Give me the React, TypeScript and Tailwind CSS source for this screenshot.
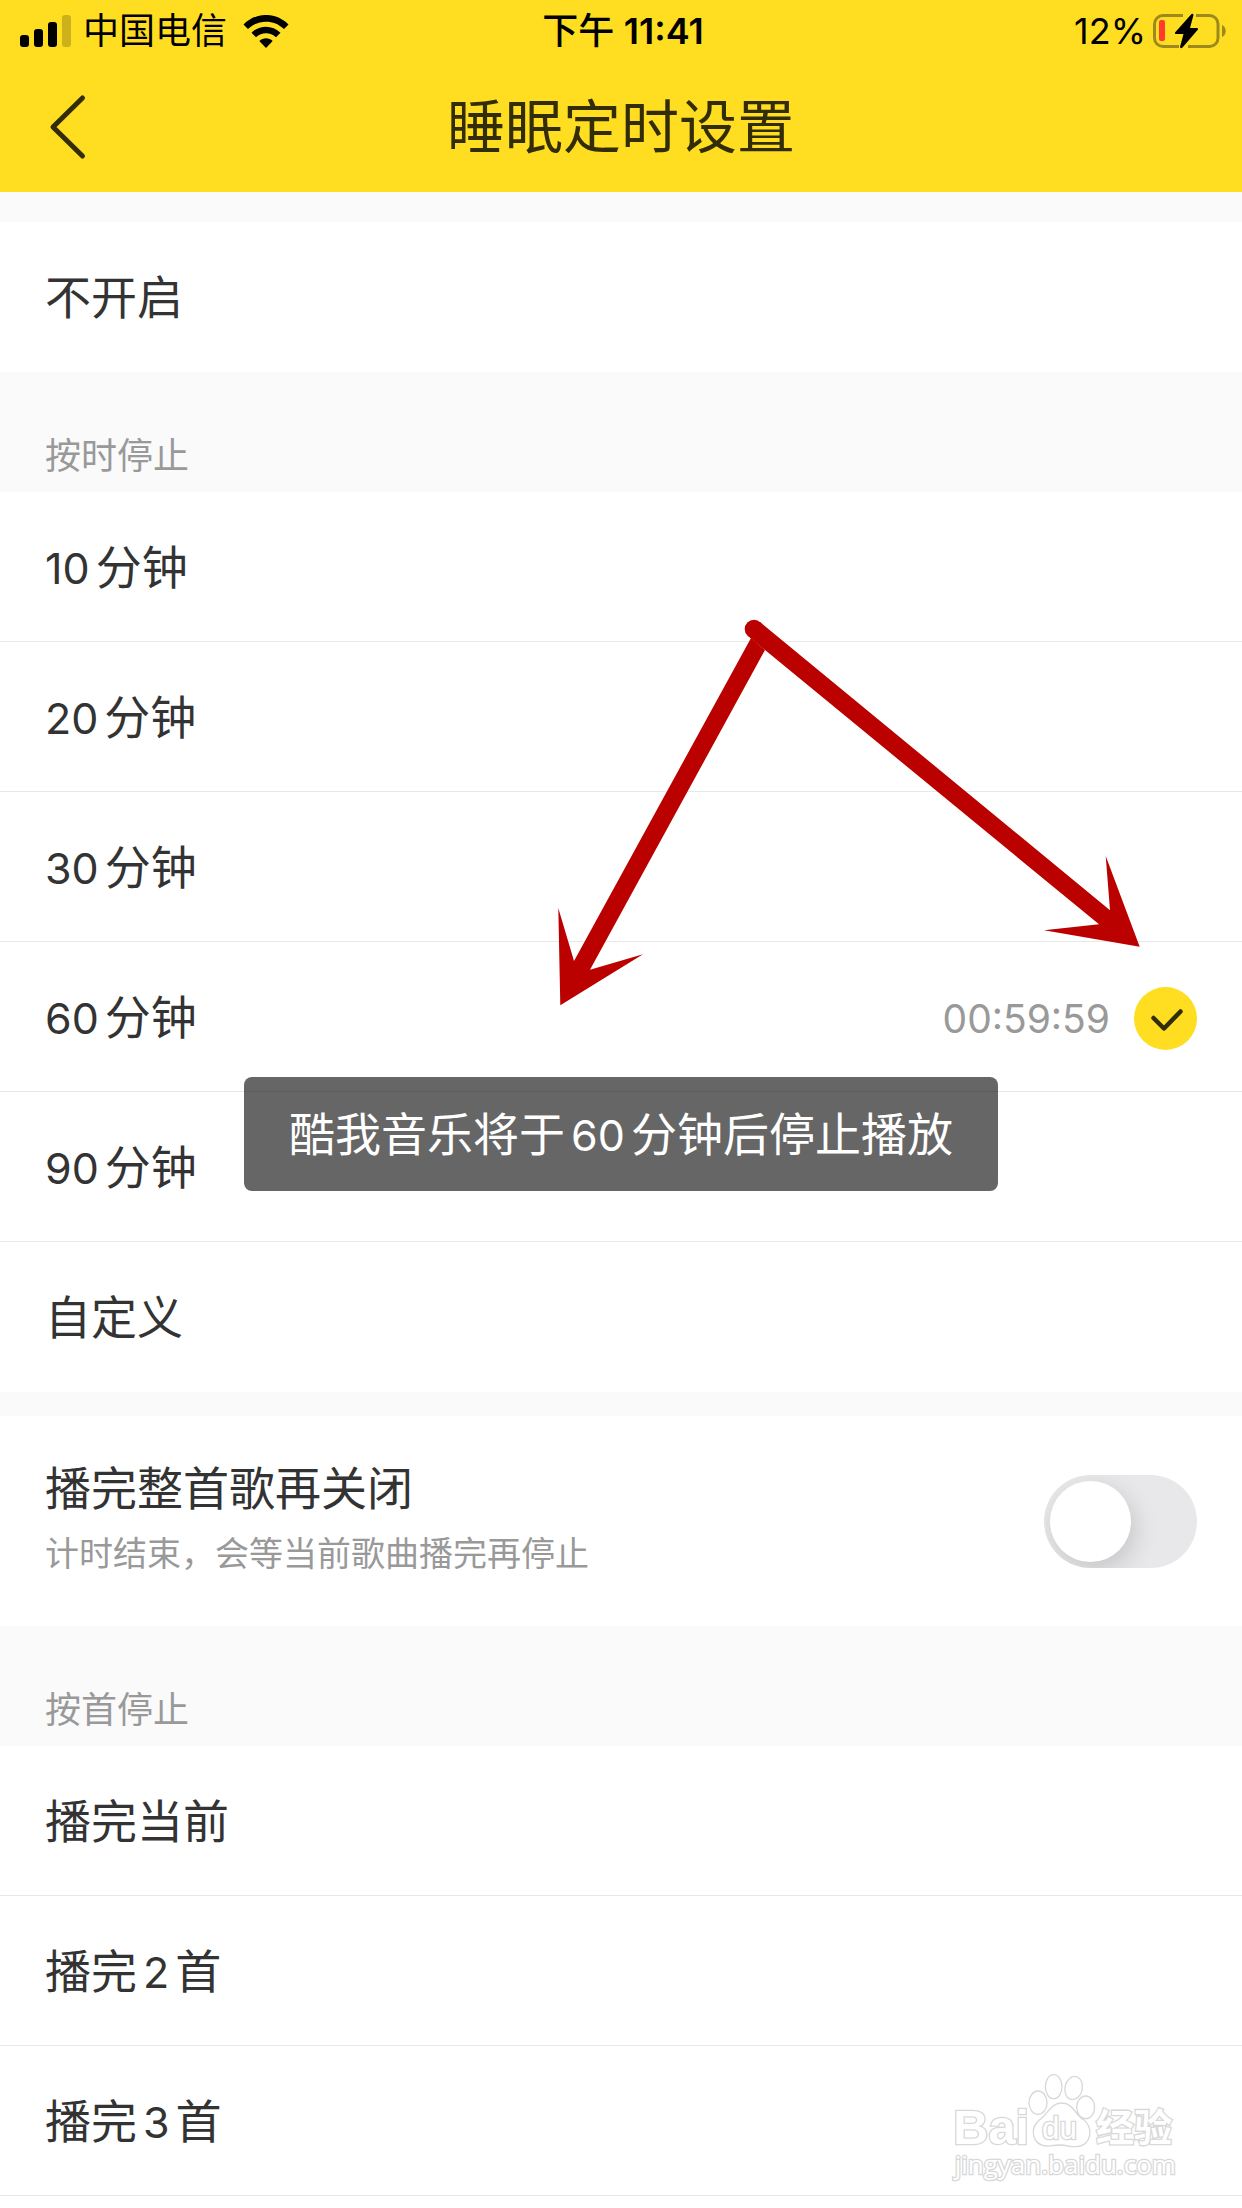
import { useState } from 'react';

const timedOptions = ['10分钟', '20分钟', '30分钟', '60分钟', '90分钟', '自定义'];
const songOptions = ['播完当前', '播完2首', '播完3首'];

// numbers are set a little smaller than the Chinese text, with air around them
function MixedText({ text }: { text: string }) {
  return (
    <>
      {text.split(/(\d+)/).filter(Boolean).map((part, index) =>
        /\d/.test(part) ? (
          <span key={index} className={index === 0 ? 'mr-1.5 text-[43px] leading-none' : 'mx-1.5 text-[43px] leading-none'}>{part}</span>
        ) : (
          <span key={index}>{part}</span>
        )
      )}
    </>
  );
}

function StatusBar() {
  return (
    <div className="grid h-[62px] grid-cols-3 items-center pr-4 pl-5 text-[36px] leading-[44px] text-black">
      <div className="flex items-center">
        <svg className="h-8 w-[51px]" viewBox="0 0 51 32">
          <rect x="0" y="20" width="9" height="12" rx="3" />
          <rect x="14" y="14" width="9" height="18" rx="3" />
          <rect x="28" y="7" width="9" height="25" rx="3" />
          <rect x="42" y="0" width="9" height="32" rx="3" opacity="0.2" />
        </svg>
        <span className="ml-3">中国电信</span>
        <svg className="ml-4 h-[33px] w-[46px]" viewBox="0 0 46 33">
          <path d="M0.5 9.5C13 -3.200 33 -3.200 45.500 9.500L41 14C31 4.200 15 4.200 5 14Z" />
          <path d="M8.500 17.700C16.500 9.700 29.500 9.700 37.500 17.700L33 22.200C27.500 16.800 18.500 16.800 13 22.200Z" />
          <path d="M16.300 26C20 22.300 26 22.300 29.700 26L23 33Z" />
        </svg>
      </div>
      <div className="text-center font-medium">
        下午 <span className="font-semibold">11:41</span>
      </div>
      <div className="flex items-center justify-end">
        <span>12%</span>
        <svg className="ml-1.5 h-9 w-[74px]" viewBox="0 0 74 36">
          <path d="M31 2.500H11A8.500 8.500 0 0 0 2.500 11V25A8.500 8.500 0 0 0 11 33.500H27M44 2.500H57.500A8.500 8.500 0 0 1 66 11V25A8.500 8.500 0 0 1 57.500 33.500H36" fill="none" stroke="#9d8a1c" strokeWidth="3" />
          <path d="M70 12C75 14 75 22 70 24Z" fill="#9d8a1c" />
          <rect x="7" y="7" width="6" height="21" rx="2" fill="#ff3b30" />
          <path d="M39.500 1L23 19.500Q22.500 21 24 21H31.500L28 34Q28.500 36 30.500 34.500L46 16.500Q46.500 15 45 15H38L41.500 2Q41 0 39.500 1Z" />
        </svg>
      </div>
    </div>
  );
}

type OptionRowProps = {
  label: string;
  checked: boolean;
  onSelect: () => void;
  bordered?: boolean;
  remaining?: string;
};

function OptionRow({ label, checked, onSelect, bordered, remaining }: OptionRowProps) {
  return (
    <label
      className={`relative flex h-[150px] cursor-pointer items-center justify-between bg-white px-[45px] ${bordered ? 'border-b border-[#e8e8e8]' : ''}`}
    >
      <input type="radio" name="sleep-timer" className="sr-only" checked={checked} onChange={onSelect} />
      <span className="text-[46px] leading-[64px]"><MixedText text={label} /></span>
      {checked && (
        <span className="flex items-center gap-6 pt-1">
          {remaining && <span className="text-[39px] leading-[48px] text-[#999999]">{remaining}</span>}
          <svg className="size-[63px]" viewBox="0 0 63 63" fill="none">
            <circle cx="31.5" cy="31.5" r="31.5" fill="#ffde21" />
            <path d="M19.500 31L30 41.500L46.500 24.500" stroke="#332d07" strokeWidth="4.500" strokeLinecap="round" strokeLinejoin="round" />
          </svg>
        </span>
      )}
    </label>
  );
}

function SectionTitle({ children }: { children: string }) {
  return (
    <h2 className="flex h-[120px] items-end px-[45px] pb-3 text-[36px] leading-[48px] text-[#999999]">
      {children}
    </h2>
  );
}

function Arrows() {
  return (
    <svg className="pointer-events-none absolute top-[123px] right-[97px] h-[395px] w-[590px]" viewBox="555 615 590 395" fill="#bb0000">
      <circle cx="754" cy="629" r="9.300" />
      <path d="M751 638L574 961L558.300 908L560.300 1005.300L643 954.300L590 969.700L765 650Z" />
      <path d="M760 622L1110 910.300L1105.700 856L1139.700 946.700L1044 930.300L1099 924.300L748 636Z" />
    </svg>
  );
}

function Watermark() {
  return (
    <svg
      className="pointer-events-none absolute right-[62px] bottom-6 h-28 w-[230px] [paint-order:stroke]"
      viewBox="60 95 690 336"
      fill="#ffffff"
      stroke="#d8d8d8"
      strokeWidth="8"
    >
      <text x="70" y="311" className="font-['Liberation_Sans'] text-[146px] font-bold">Bai</text>
      <ellipse cx="324" cy="187" rx="25" ry="33" />
      <ellipse cx="371" cy="139" rx="23" ry="34" />
      <ellipse cx="431" cy="143" rx="24" ry="33" transform="rotate(12 431 143)" />
      <ellipse cx="467" cy="201" rx="25" ry="32" />
      <path d="M395 190C427 190 435 225 460 240C488 260 484 315 440 317C415 318 408 312 390 312C372 312 365 316 350 315C308 312 300 265 330 240C352 225 365 190 395 190Z" />
      <text x="336" y="296" className="font-['Liberation_Sans'] text-[94px]">du</text>
      <text x="498" y="301" className="font-['Noto_Sans_CJK_SC'] text-[114px] font-bold">经验</text>
      <text x="74" y="402" className="font-['Open_Sans'] text-[78px]">jingyan.baidu.com</text>
    </svg>
  );
}

export default function App() {
  const [selected, setSelected] = useState('60分钟');
  const [finishSong, setFinishSong] = useState(false);

  return (
    <div className="min-h-screen bg-white font-['Inter','Noto_Sans_CJK_SC',sans-serif] text-[#333333]">
      <header className="bg-[#ffde21] text-[#332d07]">
        <StatusBar />
        <div className="grid h-[130px] grid-cols-[132px_1fr_132px] items-center">
          <button type="button" aria-label="返回" className="flex h-full items-center pl-12">
            <svg className="h-[66px] w-10" viewBox="0 0 40 66" fill="none" stroke="currentColor" strokeWidth="5" strokeLinecap="round" strokeLinejoin="round">
              <path d="M34.500 4L5 33L34.500 62" />
            </svg>
          </button>
          <h1 className="text-center text-[58px] leading-[80px]">睡眠定时设置</h1>
        </div>
      </header>

      <main className="bg-[#fafafa]">
        <div className="pt-[30px]">
          <OptionRow label="不开启" checked={selected === '不开启'} onSelect={() => setSelected('不开启')} />
        </div>

        {/* 按时停止 */}
        <SectionTitle>按时停止</SectionTitle>
        <div className="relative">
          {timedOptions.map((label, index) => (
            <OptionRow
              key={label}
              label={label}
              checked={selected === label}
              onSelect={() => setSelected(label)}
              bordered={index < timedOptions.length - 1}
              remaining="00:59:59"
            />
          ))}
          <Arrows />
          <div className="pointer-events-none absolute inset-x-0 top-[585px] flex justify-center">
            <p role="status" className="rounded-lg bg-black/60 px-[45px] py-[25px] text-[46px] leading-[64px] text-white">
              <MixedText text="酷我音乐将于60分钟后停止播放" />
            </p>
          </div>
        </div>

        {/* 播完整首歌再关闭 */}
        <label className="mt-6 flex h-[210px] cursor-pointer items-center justify-between bg-white px-[45px]">
          <span className="flex flex-col pt-0.5">
            <span className="text-[46px] leading-[64px]">播完整首歌再关闭</span>
            <span className="text-[34px] leading-[68px] text-[#999999]">计时结束，会等当前歌曲播完再停止</span>
          </span>
          <span className="relative flex h-[93px] w-[153px] items-center overflow-hidden rounded-full bg-[#e8e8ea] px-1.5 has-checked:justify-end has-checked:bg-[#ffde21]">
            <input
              type="checkbox"
              role="switch"
              className="sr-only"
              checked={finishSong}
              onChange={(e) => setFinishSong(e.target.checked)}
            />
            <span className="size-[81px] rounded-full bg-white shadow-[4px_8px_24px_rgba(0,0,0,0.15)]" />
          </span>
        </label>

        {/* 按首停止 */}
        <SectionTitle>按首停止</SectionTitle>
        <div className="relative bg-white pb-3">
          {songOptions.map((label) => (
            <OptionRow key={label} label={label} checked={selected === label} onSelect={() => setSelected(label)} bordered />
          ))}
          <Watermark />
        </div>
      </main>
    </div>
  );
}
